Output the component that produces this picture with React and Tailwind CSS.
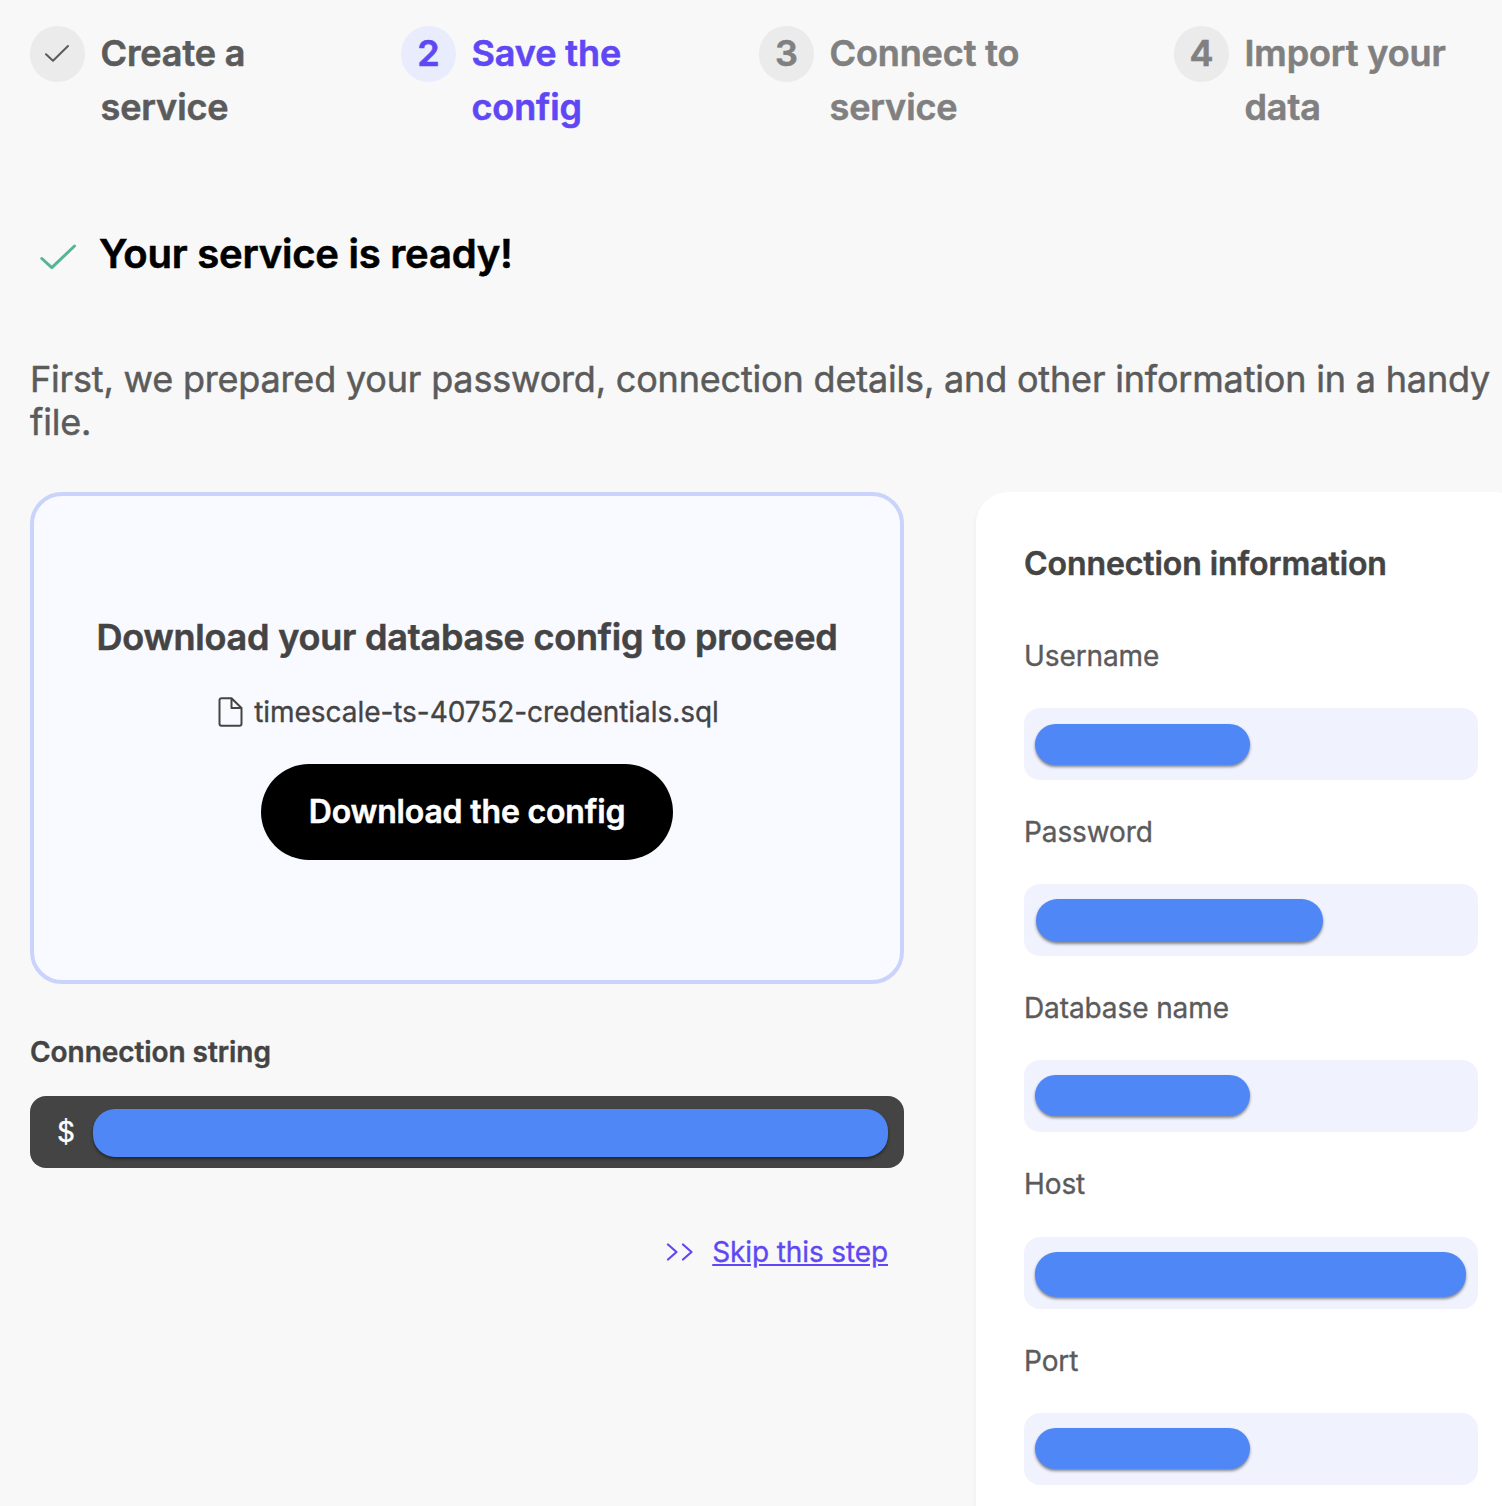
const steps = [
  { title: ["Create a", "service"], left: "w-[371px]", circle: "bg-[#ebebeb] text-[#5b5b5b]", text: "text-[#5b5b5b]", done: true },
  { n: 2, title: ["Save the", "config"], left: "w-[358px]", circle: "bg-[#e9ecfd] text-[#5f48f3]", text: "text-[#5f48f3]" },
  { n: 3, title: ["Connect to", "service"], left: "w-[415px]", circle: "bg-[#ebebeb] text-[#808080]", text: "text-[#808080]" },
  { n: 4, title: ["Import your", "data"], left: "w-[328px]", circle: "bg-[#ebebeb] text-[#808080]", text: "text-[#808080]" },
];

const fields = [
  { label: "Username", bar: "ml-[11px] mt-4 h-[41px] w-[215px]", labelBox: "h-[76px]" },
  { label: "Password", bar: "ml-3 mt-[15px] h-[43px] w-[287px]", labelBox: "h-[76px]" },
  { label: "Database name", bar: "ml-[11px] mt-[15px] h-[41px] w-[215px]", labelBox: "h-[76px]" },
  { label: "Host", bar: "ml-[11px] mt-[15px] h-[45px] w-[431px]", labelBox: "h-[77px]" },
  { label: "Port", bar: "ml-[11px] mt-[15px] h-[41px] w-[215px]", labelBox: "h-[76px]" },
];

function Bar({ className }) {
  return <div className={`rounded-[22px] bg-[#4f87f6] shadow-[0_2px_3px_rgba(0,0,0,0.45)] ${className}`} />;
}

export default function App() {
  return (
    <div className="h-[1506px] w-[1502px] overflow-hidden bg-[#f8f8f8] font-['Inter',sans-serif] [-webkit-text-stroke:0.35px_currentColor]">
      <div className="flex h-[232px] pl-[30px] pt-[26px] [-webkit-text-stroke-width:0.6px]">
        {steps.map((s) => (
          <div key={s.title[0]} className={`flex shrink-0 gap-[15.5px] ${s.left}`}>
            <div className={`flex h-[56px] w-[55px] justify-center rounded-full text-[36px] font-semibold leading-[54px] ${s.circle}`}>
              {s.done ? (
                <svg className="mt-[18px] mr-px" width="26" height="20" viewBox="0 0 26 20" fill="none" stroke="currentColor" strokeWidth="2" strokeLinecap="round" strokeLinejoin="round">
                  <path d="M2 10.200L9 16.700L24 2" />
                </svg>
              ) : (
                s.n
              )}
            </div>
            <div className={`whitespace-nowrap text-[36px] font-semibold leading-[54px] tracking-[-0.1px] ${s.text}`}>
              <div>{s.title[0]}</div>
              <div>{s.title[1]}</div>
            </div>
          </div>
        ))}
      </div>

      <div className="flex h-[126px] pl-[39px]">
        <svg className="mt-[11px]" width="38" height="28" viewBox="0 0 38 28" fill="none" stroke="#53b795" strokeWidth="3" strokeLinecap="round" strokeLinejoin="round">
          <path d="M2.800 15.500L12.800 24.700L35.500 3" />
        </svg>
        <h1 className="ml-[22px] whitespace-nowrap text-[40px] font-semibold leading-[44px] tracking-[-0.23px] text-black [-webkit-text-stroke-width:0.6px]">Your service is ready!</h1>
      </div>

      <p className="h-[134px] whitespace-nowrap pl-[30px] text-[36px] leading-[43px] tracking-[-0.182px] text-[#5b5b5b] [-webkit-text-stroke-width:0.5px]">
        First, we prepared your password, connection details, and other information in a handy
        <br />
        file.
      </p>

      <div className="flex pl-[30px]">
        <div className="w-[874px] shrink-0">
          <div className="flex h-[492px] flex-col items-center rounded-[32px] border-4 border-[#c9d3fb] bg-[#f9faff] pt-[114px]">
            <h2 className="whitespace-nowrap text-[36px] font-semibold leading-[54px] tracking-[-0.2px] text-[#444] [-webkit-text-stroke-width:0.6px]">Download your database config to proceed</h2>
            <div className="mt-7 flex h-10 items-center gap-[11px] pl-[3px] text-[28px] tracking-[-0.05px] text-[#444]">
              <svg width="25" height="30" viewBox="0 0 25 30" fill="none" stroke="currentColor" strokeWidth="2" strokeLinejoin="round">
                <path d="M13.500 1.200H3.500a2 2 0 0 0-2 2v23.600a2 2 0 0 0 2 2h18a2 2 0 0 0 2-2V11zM13.500 1.200V11h10" />
              </svg>
              <span>timescale-ts-40752-credentials.sql</span>
            </div>
            <button className="mt-8 h-24 w-[412px] rounded-full bg-black text-[32px] font-semibold tracking-[-0.17px] text-white [-webkit-text-stroke-width:0.5px]">Download the config</button>
          </div>
          <h3 className="mt-[47px] text-[28px] font-semibold leading-[42px] tracking-[-0.06px] text-[#444] [-webkit-text-stroke-width:0.4px]">Connection string</h3>
          <div className="mt-[23px] flex h-[72px] rounded-2xl bg-[#444] pl-[27px] text-[28px] leading-[72px] text-white">
            <span className="w-9">$</span>
            <Bar className="mt-[13px] h-12 w-[795px]" />
          </div>
          <div className="mt-16 flex h-10 items-center justify-end gap-[18px] pr-4 text-[28px] tracking-[-0.12px] text-[#5f48f3]">
            <svg width="28" height="18" viewBox="0 0 28 18" fill="none" stroke="currentColor" strokeWidth="2.200" strokeLinecap="round" strokeLinejoin="round">
              <path d="M2 1.500L10.500 9L2 16.500M17 1.500L25.500 9L17 16.500" />
            </svg>
            <a className="underline">Skip this step</a>
          </div>
        </div>

        <div className="ml-[72px] h-[1100px] w-[550px] shrink-0 rounded-[32px] bg-white pl-12 pt-12 shadow-[0_4px_6px_rgba(0,0,0,0.05)]">
          <h2 className="h-[92px] text-[32px] font-semibold leading-[48px] tracking-[-0.08px] text-[#444] [-webkit-text-stroke-width:0.5px]">Connection information</h2>
          {fields.map((f) => (
            <div key={f.label} className="mb-7">
              <div className={`pt-[3px] text-[28px] leading-[42px] tracking-[-0.1px] text-[#5b5b5b] ${f.labelBox}`}>{f.label}</div>
              <div className="flex h-[72px] w-[454px] rounded-2xl bg-[#f0f2fe]">
                <Bar className={f.bar} />
              </div>
            </div>
          ))}
        </div>
      </div>
    </div>
  );
}
